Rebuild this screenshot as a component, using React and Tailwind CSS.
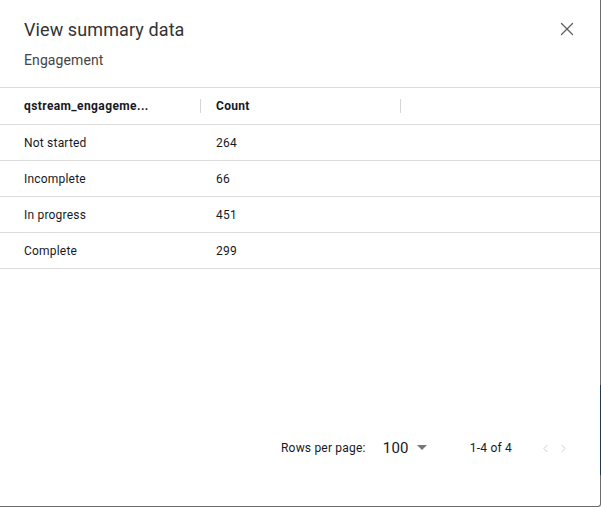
import { X, ChevronLeft, ChevronRight } from 'lucide-react'

/**
 * View summary data - modal with a small table and pagination
 */
export default function App() {
  const rows = [
    { label: 'Not started', count: 264 },
    { label: 'Incomplete', count: 66 },
    { label: 'In progress', count: 451 },
    { label: 'Complete', count: 299 },
  ]

  return (
    <div
      className="relative w-[601px] h-[507px] flex flex-col bg-white border-r border-b border-[#6b6b6b] rounded-br-[3px] text-[#16191f]"
      style={{ fontFamily: 'Roboto, "Liberation Sans", sans-serif' }}
    >
      {/* Header */}
      <div className="flex items-start justify-between pl-6 pr-[22px] pt-[19px] h-[87px]">
        <div>
          <h1 className="text-[18px] leading-[22px] text-[#333] tracking-[0.1px]">View summary data</h1>
          <p className="mt-[10px] text-[14px] leading-[18px] text-[#444] tracking-[0.1px]">Engagement</p>
        </div>
        <X className="mt-[-1px] w-[22px] h-[22px] text-[#5f5f5f]" strokeWidth={1.4} />
      </div>

      {/* Table */}
      <div className="border-t border-[#dcdcdc]">
        <div className="flex items-center h-[37px] border-b border-[#dcdcdc] text-[12px] font-bold text-[#16191f]">
          <div className="w-[201px] pl-6 flex items-center justify-between">
            <span className="tracking-[0.4px]">qstream_engageme...</span>
            <span className="w-px h-[14px] bg-[#d5d5d5]" />
          </div>
          <div className="w-[200px] pl-[15px] flex items-center justify-between">
            <span className="tracking-[0.3px]">Count</span>
            <span className="w-px h-[14px] bg-[#d5d5d5]" />
          </div>
        </div>
        {rows.map((r) => (
          <div key={r.label} className="flex items-center h-[36px] border-b border-[#dcdcdc] text-[12px] text-[#16191f] tracking-[0.2px]">
            <div className="w-[201px] pl-6">{r.label}</div>
            <div className="pl-[15px]">{r.count}</div>
          </div>
        ))}
      </div>

      <div className="flex-1" />

      {/* Pagination */}
      <div className="flex items-center h-[30px] mb-[43px] pl-[281px] text-[12px] text-[#16191f] tracking-[0.2px]">
        <span>Rows per page:</span>
        <span className="ml-[17px] text-[15px] tracking-[0.3px]">100</span>
        <svg width="10" height="6" viewBox="0 0 10 6" className="ml-[8px]">
          <path d="M0 0h10L5 5z" fill="#777" />
        </svg>
        <span className="ml-[43px]">1-4 of 4</span>
        <ChevronLeft className="ml-[27px] w-[13px] h-[13px] text-[#c4c4c4]" strokeWidth={1.4} />
        <ChevronRight className="ml-[5px] w-[13px] h-[13px] text-[#c4c4c4]" strokeWidth={1.4} />
      </div>

      {/* focus strip on the right edge */}
      <div className="absolute right-[-1px] top-[385px] w-px h-[90px] bg-[#1f3a55]" />
    </div>
  )
}
